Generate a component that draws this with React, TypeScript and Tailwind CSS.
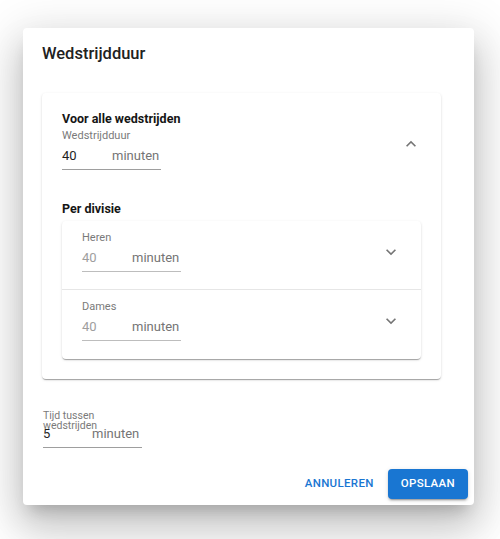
import React from 'react'

const font = { fontFamily: 'Roboto, "Noto Sans", sans-serif' }

function ChevronIcon({ up }: { up?: boolean }) {
  return (
    <svg width="20" height="20" viewBox="0 0 24 24" className="shrink-0 fill-[#757575]">
      {up ? (
        <path d="M12 8l-6 6 1.41 1.41L12 10.83l4.59 4.58L18 14z" />
      ) : (
        <path d="M16.59 8.59 12 13.17 7.41 8.59 6 10l6 6 6-6z" />
      )}
    </svg>
  )
}

// Input with "minuten" end adornment
function MinutesField({
  value,
  inputWidth,
  muted,
}: {
  value: string
  inputWidth: string
  muted?: boolean
}) {
  return (
    <div
      className={`flex w-[99px] pt-[3px] pb-[3px] border-b ${
        muted ? 'border-[#bdbdbd]' : 'border-[#9e9e9e]'
      }`}
    >
      <span
        className={`${inputWidth} text-[13px] leading-[20px] ${
          muted ? 'text-[#9e9e9e]' : 'text-[#1f1f1f]'
        }`}
      >
        {value}
      </span>
      <span className="text-[13px] leading-[20px] text-[#757575]">minuten</span>
    </div>
  )
}

function DivisionRow({ name, last }: { name: string; last?: boolean }) {
  return (
    <div
      className={`flex items-center justify-between pl-5 pr-5 pt-[10px] ${
        last ? 'pb-[18px]' : 'pb-[17px] border-b border-[#e6e6e6]'
      }`}
    >
      <div>
        <div className="text-[11px] leading-[14px] text-[#7a7a7a]">{name}</div>
        <MinutesField value="40" inputWidth="w-[50px]" muted />
      </div>
      <ChevronIcon />
    </div>
  )
}

export default function App() {
  return (
    <div className="min-h-[539px] bg-white pt-[28px] pl-[23px]" style={font}>
      <div className="w-[451px] rounded-[4px] bg-white shadow-[0_11px_15px_-7px_rgba(0,0,0,0.2),0_24px_38px_3px_rgba(0,0,0,0.14),0_9px_46px_8px_rgba(0,0,0,0.12)] pt-[10px] pb-[6px]">
        <h2 className="pl-[19px] text-[16.5px] leading-[32px] font-medium text-[#212121]">
          Wedstrijdduur
        </h2>

        {/* Accordion panel */}
        <div className="ml-[19px] mt-[23px] w-[399px] rounded-[4px] bg-white px-5 pt-[15px] pb-5 shadow-[0_2px_1px_-1px_rgba(0,0,0,0.2),0_1px_1px_0_rgba(0,0,0,0.14),0_1px_3px_0_rgba(0,0,0,0.12)]">
          <div className="flex items-start justify-between">
            <div>
              <div className="text-[12.5px] leading-[21px] font-bold text-[#151515]">
                Voor alle wedstrijden
              </div>
              <div className="text-[11px] leading-[14px] text-[#7a7a7a]">Wedstrijdduur</div>
              <MinutesField value="40" inputWidth="w-[50px]" />
            </div>
            <div className="mt-[26px]">
              <ChevronIcon up />
            </div>
          </div>

          <div className="mt-[29px] text-[12.5px] leading-[20px] font-bold text-[#151515]">
            Per divisie
          </div>
          <div className="mt-[2px] rounded-[4px] bg-white shadow-[0_2px_1px_-1px_rgba(0,0,0,0.2),0_1px_1px_0_rgba(0,0,0,0.14),0_1px_3px_0_rgba(0,0,0,0.12)]">
            <DivisionRow name="Heren" />
            <DivisionRow name="Dames" last />
          </div>
        </div>

        {/* Time between matches */}
        <div className="mt-[32px] ml-5 w-[99px]">
          <div className="text-[10.5px] leading-[10px] text-[#7a7a7a]">
            Tijd tussen
            <br />
            wedstrijden
          </div>
          <div className="-mt-[10px]">
            <MinutesField value="5" inputWidth="w-[49px]" />
          </div>
        </div>

        <div className="mt-[21px] flex justify-end gap-2 pr-[6px]">
          <button className="h-[30px] px-[6px] text-[11.5px] font-medium uppercase tracking-[0.33px] text-[#1976d2]">
            Annuleren
          </button>
          <button className="h-[30px] rounded-[4px] bg-[#1976d2] px-[13px] text-[11.5px] font-medium uppercase tracking-[0.33px] text-white shadow-[0_3px_1px_-2px_rgba(0,0,0,0.2),0_2px_2px_0_rgba(0,0,0,0.14),0_1px_5px_0_rgba(0,0,0,0.12)]">
            Opslaan
          </button>
        </div>
      </div>
    </div>
  )
}
